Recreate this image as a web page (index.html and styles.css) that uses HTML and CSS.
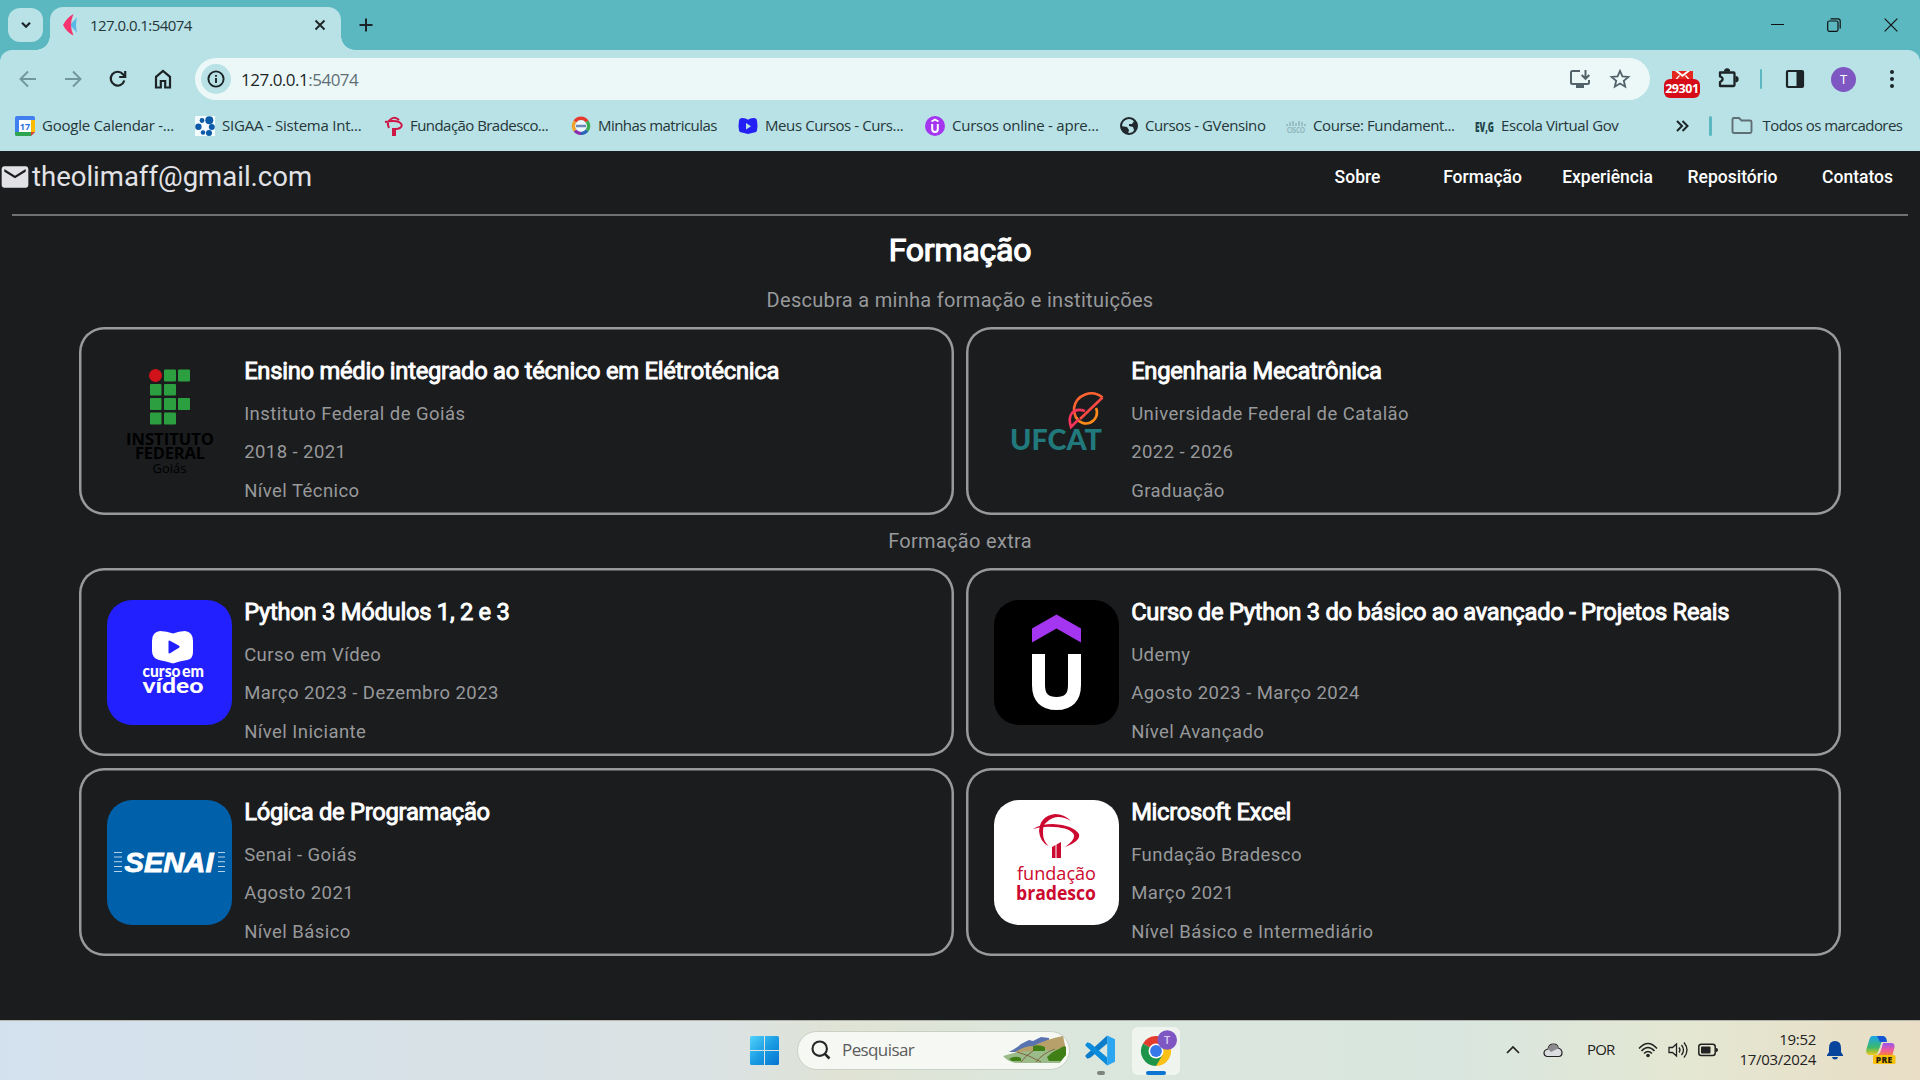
FILE: index.html
```html
<!DOCTYPE html>
<html lang="pt-BR">
<head>
<meta charset="utf-8">
<title>127.0.0.1:54074</title>
<link rel="stylesheet" href="styles.css">
</head>
<body>
<div class="screen">
  <header class="tabstrip">
    <button class="tab-search"><svg width="14" height="14" viewBox="0 0 14 14"><path d="M3 4.800l4 4 4-4" fill="none" stroke="#1c2427" stroke-width="2.200"/></svg></button>
    <div class="tab">
      <svg class="tab-icon" width="16" height="22" viewBox="0 0 16 20" preserveAspectRatio="none"><path d="M8 9l6-6q-2 7 0 14l-6-6z" fill="#56b9ea"/><path d="M0 10Q4 3 10.500 0Q8 5 8 10q0 5 2.500 9.500Q4 17 0 10z" fill="#f5336f"/></svg>
      <span class="tab-title">127.0.0.1:54074</span>
      <svg width="12" height="12" viewBox="0 0 12 12"><path d="M1.500 1.500l9 9m0-9l-9 9" stroke="#1c2427" stroke-width="1.900"/></svg>
    </div>
    <svg class="plus" width="14" height="14" viewBox="0 0 14 14"><path d="M7 .5v13M.5 7h13" stroke="#1c2427" stroke-width="2"/></svg>
    <div class="window-controls">
      <svg width="13" height="14" viewBox="0 0 13 14"><path d="M0 6.500h13" stroke="#111"/></svg>
      <svg width="14" height="14" viewBox="0 0 14 14" fill="none" stroke="#111" stroke-width="1.200"><rect x=".7" y="3" width="10.300" height="10.300" rx="1.500"/><path d="M3.500.8H11q2.200 0 2.200 2.200v7.500"/></svg>
      <svg width="14" height="14" viewBox="0 0 14 14"><path d="M.7.7l12.600 12.600m0-12.600L.7 13.300" stroke="#111" stroke-width="1.200"/></svg>
    </div>
  </header>

  <div class="toolbar">
    <nav class="nav-icons">
      <svg width="20" height="20" viewBox="0 0 20 20" fill="none" stroke="#72979b" stroke-width="1.900"><path d="M18 10H3M10 2.500L2.500 10l7.500 7.500"/></svg>
      <svg width="20" height="20" viewBox="0 0 20 20" fill="none" stroke="#72979b" stroke-width="1.900"><path d="M2 10h15M10 2.500l7.500 7.500-7.500 7.500"/></svg>
      <svg width="20" height="20" viewBox="0 0 20 20" fill="none" stroke="#1c2427" stroke-width="2.200"><path d="M16.300 11.500A6.900 6.900 0 1 1 15 5.300L17 7.500"/><path d="M17.200 2v6h-6" /></svg>
      <svg width="20" height="20" viewBox="0 0 20 20" fill="none" stroke="#1c2427" stroke-width="2.200"><path d="M3 7.800L10 2l7 5.800V18.500h-4.800V12H7.800v6.500H3z"/></svg>
    </nav>
    <div class="omnibox">
      <span class="info"><svg width="18" height="18" viewBox="0 0 18 18"><circle cx="9" cy="9" r="7.600" fill="none" stroke="#1c2427" stroke-width="1.900"/><path d="M9 8v5M9 4.900v1.900" stroke="#1c2427" stroke-width="1.900"/></svg></span>
      <span class="url">127.0.0.1<i>:54074</i></span>
      <svg class="install" width="22" height="20" viewBox="0 0 22 20" fill="none" stroke="#53636a" stroke-width="2"><path d="M11 2H3.500Q2 2 2 3.500v10Q2 15 3.500 15h15q1.500 0 1.500-1.500V11"/><path d="M16.500 1v8.500M12.700 6l3.800 3.800L20.300 6"/><path d="M7 17.500h8" stroke-width="3"/></svg>
      <svg width="20" height="20" viewBox="0 0 20 20" fill="none" stroke="#53636a" stroke-width="1.800"><path d="M10 1.900l2.400 5.500 6 .5-4.600 3.900 1.400 5.900-5.200-3.100-5.200 3.100 1.400-5.900L1.600 7.900l6-.5z"/></svg>
    </div>
    <div class="tools">
      <div class="gmail">
        <svg width="21" height="9" viewBox="0 0 21 9"><path d="M0 0h21v9H0z" fill="#e4281e"/><path d="M3 0h15l-7.500 6z" fill="#fff"/><path d="M6 0h9l-4.500 3.600z" fill="#e4281e"/><path d="M3.500 9l4-4.500M17.500 9l-4-4.500" stroke="#fff" stroke-width="1.200"/></svg>
        <b>29301</b>
      </div>
      <svg width="24" height="24" viewBox="0 0 24 24" fill="none" stroke="#1c2427" stroke-width="2.300"><path d="M4 5.500h13.500Q18.500 5.500 18.500 6.500v11.500q0 1-1 1H4v-4q2.600-1 2.600-2.900T4 9.500z" stroke-linejoin="round"/><path d="M9 4.500a2 2 0 0 1 4 0M19.500 10.200a2 2 0 0 1 0 4" fill="#1c2427"/></svg>
      <i class="sep"></i>
      <svg width="20" height="20" viewBox="0 0 20 20"><rect x="2" y="2" width="16" height="16" rx="1" fill="none" stroke="#1c2427" stroke-width="2.200"/><path d="M11.500 2H18v16h-6.500z" fill="#1c2427"/></svg>
      <span class="avatar">T</span>
      <svg width="6" height="22" viewBox="0 0 6 22" fill="#1c2427"><circle cx="3" cy="4" r="2"/><circle cx="3" cy="11" r="2"/><circle cx="3" cy="18" r="2"/></svg>
    </div>
  </div>

  <div class="bookmarks">
    <a class="w180 wide"><svg viewBox="0 0 20 20"><path d="M0 2Q0 0 2 0h16q2 0 2 2v14l-4 4H2q-2 0-2-2z" fill="#3f7ff0"/><path d="M16 4h4v12h-4z" fill="#fbbc04"/><path d="M4 16h12v4H2q-2 0-2-2v-2z" fill="#2fa450"/><path d="M16 16h4l-4 4z" fill="#ea4335"/><path d="M4 4h12v12H4z" fill="#fff"/><text x="10" y="13.700" text-anchor="middle" class="cal">17</text></svg><span>Google Calendar -...</span></a>
    <a class="w189 wide"><svg viewBox="0 0 20 20"><path d="M0 0h20v20H0z" fill="#f4fbff"/><g fill="#0b5aa8"><circle cx="14.300" cy="4.300" r="4"/><circle cx="7" cy="4.500" r="2.400"/><circle cx="3.400" cy="10.700" r="3.200"/><circle cx="16.800" cy="11" r="3"/><circle cx="8" cy="16.500" r="2.300"/><circle cx="14" cy="16.900" r="3"/></g></svg><span>SIGAA - Sistema Int...</span></a>
    <a class="w187 near"><svg viewBox="0 0 20 20" fill="none" stroke="#cf1747" stroke-width="2"><path d="M5 12Q2 6 7 3q4-3 8 1M1 6q9-2 14 0 5 3 1 6-2 1-4 1"/><path d="M10 12v8" stroke-width="4"/></svg><span>Fundação Bradesco...</span></a>
    <a class="w167"><svg viewBox="0 0 20 20" fill="none" stroke-width="3.500"><path d="M4 5.500A7.300 7.300 0 0 1 16 5.500" stroke="#e63a2e"/><path d="M16 5.500A7.300 7.300 0 0 1 16 14.500" stroke="#3caa4f"/><path d="M16 14.500A7.300 7.300 0 0 1 10 17.300" stroke="#2864b8"/><path d="M10 17.300A7.300 7.300 0 0 1 4 14.500" stroke="#8b2eae"/><path d="M4 14.500A7.300 7.300 0 0 1 4 5.500" stroke="#f0a02b"/><circle cx="10" cy="10" r="5.700" fill="#eef7fb" stroke="none"/><path d="M5 10h10" stroke="#6a88ba" stroke-width="2.500"/></svg><span>Minhas matriculas</span></a>
    <a class="w187 mid"><svg viewBox="0 0 20 20"><path d="M1 5q0-3 3.500-3Q8 2.200 10 3.700q2-1.500 5.500-1.700Q19 2 19 5q1 5 0 9 0 2-3 2.500-3 .5-6 1.500-3-1-6-1.500-3-.5-3-2.500-1-4 0-9z" fill="#2320f5"/><path d="M8 7l5 3.200-5 3.300z" fill="#b8e2e5"/></svg><span>Meus Cursos - Curs...</span></a>
    <a class="w194 wide"><svg viewBox="0 0 20 20"><circle cx="10" cy="10" r="10" fill="#a435f0"/><path d="M6.500 5.500L10 3.500l3.500 2" fill="none" stroke="#fff" stroke-width="1.800"/><path d="M7.200 8v5q0 3 2.800 3t2.800-3V8" fill="none" stroke="#fff" stroke-width="2"/></svg><span>Cursos online - apre...</span></a>
    <a class="w167 mid near"><svg viewBox="0 0 20 20"><circle cx="10" cy="10" r="8" fill="none" stroke="#20292d" stroke-width="2"/><path d="M10 2L4 5l-2 5 6 1 2 3-1 4-6-3-1-5L5 3zM11 2l4 3-2 3h-3v2l4 1 1 3-1 3 4-5V8l-4-6z" fill="#20292d"/></svg><span>Cursos - GVensino</span></a>
    <a class="w189 mid"><svg viewBox="0 0 20 20" stroke="#8fb3b9" stroke-width="1.500"><path d="M1 8v2M4 6v4M7 5v5M10 7v3M13 5v5M16 6v4M19 8v2"/><text x="1" y="16.500" class="cisco" textLength="18" lengthAdjust="spacingAndGlyphs">CISCO</text></svg><span>Course: Fundament...</span></a>
    <a class="w189 mid near"><svg viewBox="0 0 20 20"><text x="0" y="15.500" class="evg" textLength="19" lengthAdjust="spacingAndGlyphs">EV,G</text></svg><span>Escola Virtual Gov</span></a>
    <svg class="more" viewBox="0 0 14 14" fill="none" stroke="#1c2427" stroke-width="2"><path d="M2 2l5 5-5 5M7.500 2l5 5-5 5"/></svg>
    <i class="sep"></i>
    <a class="all"><svg viewBox="0 0 22 20" fill="none" stroke="#5f6f75" stroke-width="1.900"><path d="M1.500 3.500Q1.500 2 3 2h5l2.500 2.500H19q1.500 0 1.500 1.500v9.500q0 1.500-1.500 1.500H3q-1.500 0-1.500-1.500z"/></svg><span>Todos os marcadores</span></a>
  </div>

  <main class="page">
    <header class="site-head">
      <div class="mail"><svg width="32" height="32" viewBox="0 0 24 24"><path d="M20 4H4c-1.100 0-1.990.9-1.990 2L2 18c0 1.100.9 2 2 2h16c1.100 0 2-.9 2-2V6c0-1.100-.9-2-2-2zm0 4l-8 5-8-5V6l8 5 8-5v2z" fill="#e2e2e6"/></svg><span>theolimaff@gmail.com</span></div>
      <nav class="menu"><a>Sobre</a><a>Formação</a><a>Experiência</a><a>Repositório</a><a>Contatos</a></nav>
    </header>
    <hr>
    <h1>Formação</h1>
    <p class="lead">Descubra a minha formação e instituições</p>
    <section class="cards">
      <article class="card">
        <svg class="logo" viewBox="0 1.500 125 125">
          <circle cx="48.500" cy="18" r="6.500" fill="#d0131a"/>
          <g fill="#2c9f40"><rect x="57" y="12" width="12" height="12" rx="1"/><rect x="71" y="12" width="12" height="12" rx="1"/><rect x="43" y="26.500" width="11.500" height="11.500" rx="1"/><rect x="57" y="26.500" width="12" height="11.500" rx="1"/><rect x="43" y="40.500" width="11.500" height="12" rx="1"/><rect x="57" y="40.500" width="12" height="12" rx="1"/><rect x="71" y="40.500" width="12" height="12" rx="1"/><rect x="43" y="55" width="11.500" height="12" rx="1"/><rect x="57" y="55" width="12" height="12" rx="1"/></g>
          <g class="if-text"><text x="19" y="87" textLength="88" class="strong">INSTITUTO</text><text x="28" y="101" textLength="70" class="strong">FEDERAL</text><text x="45.500" y="115" textLength="34" class="small">Goiás</text></g>
        </svg>
        <div class="info-text"><h2>Ensino médio integrado ao técnico em Elétrotécnica</h2><p>Instituto Federal de Goiás</p><p>2018 - 2021</p><p>Nível Técnico</p></div>
      </article>
      <article class="card">
        <svg class="logo" viewBox="0 1 125 125">
          <g fill="none" stroke-width="2.600"><path d="M108.500 39.500A17.500 17.500 0 0 0 80 50q0 5 2 10" stroke="#ff6430"/><path d="M82 59a10.800 10.800 0 1 0 20-9" stroke="#ff8a1c"/><path d="M91 53q-9-3-13 2-4 5-1 14l8-8" stroke="#f63358"/><path d="M86 61l22.500-21.500" stroke="#ff4a42"/></g>
          <text x="16" y="91.500" class="ufcat" textLength="92" lengthAdjust="spacingAndGlyphs">UFCAT</text>
        </svg>
        <div class="info-text"><h2>Engenharia Mecatrônica</h2><p>Universidade Federal de Catalão</p><p>2022 - 2026</p><p>Graduação</p></div>
      </article>
    </section>
    <p class="lead extra">Formação extra</p>
    <section class="cards">
      <article class="card">
        <svg class="logo" viewBox="0 0 125 125">
          <rect width="125" height="125" rx="25" fill="#2320ff"/>
          <path d="M45 41q0-9 8-10 7 0 13 2.500Q72 31 78 31q8 1 8 10v11q0 7-6 8-8 1-14 3.500Q59 61 52 60q-7-2-7-9z" fill="#fff"/><path d="M61.500 41.500q0-1.500 1.500-.7l9 5q1.500 1 0 2l-9 5.500q-1.500.7-1.500-.8z" fill="#2320ff"/>
          <g class="cev"><text x="35.500" y="77" textLength="38" lengthAdjust="spacingAndGlyphs" class="cev-a">curso</text><text x="75" y="77" textLength="22" lengthAdjust="spacingAndGlyphs" class="cev-a">em</text><text x="35.500" y="92.500" textLength="61" lengthAdjust="spacingAndGlyphs" class="cev-b">vídeo</text></g>
        </svg>
        <div class="info-text"><h2>Python 3 Módulos 1, 2 e 3</h2><p>Curso em Vídeo</p><p>Março 2023 - Dezembro 2023</p><p>Nível Iniciante</p></div>
      </article>
      <article class="card">
        <svg class="logo" viewBox="0 0 125 125">
          <rect width="125" height="125" rx="25" fill="#000"/>
          <path d="M38 28.500L62.500 14.500 87 28.500v14L62.500 28.500 38 42.500z" fill="#a435f0"/>
          <path d="M44.500 54v31q0 18.500 18 18.500t18-18.500V54" fill="none" stroke="#fff" stroke-width="13"/>
        </svg>
        <div class="info-text"><h2>Curso de Python 3 do básico ao avançado - Projetos Reais</h2><p>Udemy</p><p>Agosto 2023 - Março 2024</p><p>Nível Avançado</p></div>
      </article>
      <article class="card">
        <svg class="logo" viewBox="0 0 125 125">
          <rect width="125" height="125" rx="25" fill="#0060a9"/>
          <path d="M7 52.500h8M7 57h8M7 61.700h8M7 66.500h8M7 71.500h8M111 52.500h7M111 57h7M111 61.700h7M111 66.500h7M111 71.500h7" stroke="#b7d3ea" stroke-width="1"/>
          <text x="17.500" y="71.500" class="senai" textLength="89" lengthAdjust="spacingAndGlyphs">SENAI</text>
        </svg>
        <div class="info-text"><h2>Lógica de Programação</h2><p>Senai - Goiás</p><p>Agosto 2021</p><p>Nível Básico</p></div>
      </article>
      <article class="card">
        <svg class="logo" viewBox="0 0 125 125">
          <rect width="125" height="125" rx="25" fill="#fff"/>
          <g fill="#cc092f"><path d="M54.500 46Q46 42 45 31 46 16 61 14q9 0 16 7-10-6-18-3-11 4-10 15 0 8 5.500 13z"/><path d="M39 29q8-5 20-5 20 1 26 10 2 7-14 13 10-7 9-12-3-7-20-8-12-1-21 2z"/><path d="M58 47l3.500-2v13H58zM62.500 44.500L67 42v16h-4.500z"/></g>
          <text x="23" y="80" class="fund" textLength="79" lengthAdjust="spacingAndGlyphs">fundação</text>
          <text x="22" y="99.500" class="brad" textLength="80" lengthAdjust="spacingAndGlyphs">bradesco</text>
        </svg>
        <div class="info-text"><h2>Microsoft Excel</h2><p>Fundação Bradesco</p><p>Março 2021</p><p>Nível Básico e Intermediário</p></div>
      </article>
    </section>
  </main>

  <footer class="taskbar">
    <div class="dock">
      <svg class="win" width="30" height="30" viewBox="0 0 30 30"><defs><linearGradient id="w" x2="1" y2="1"><stop stop-color="#52d3fb"/><stop offset=".5" stop-color="#1b9de4"/><stop offset="1" stop-color="#0573cf"/></linearGradient></defs><path d="M1.500 0H14v14H0V1.500Q0 0 1.500 0zM15 0h12.500Q29 0 29 1.500V14H15zM0 15h14v14H1.500Q0 29 0 27.500zM15 15h14v12.500q0 1.500-1.500 1.500H15z" fill="url(#w)"/></svg>
      <div class="search">
        <svg width="20" height="20" viewBox="0 0 20 20" fill="none" stroke="#262626" stroke-width="2.100"><circle cx="8.700" cy="8.700" r="7.200"/><path d="M13.800 13.800L18.500 18.500" stroke-width="2.600"/></svg>
        <span>Pesquisar</span>
        <svg class="land" width="64" height="28" viewBox="0 0 64 28"><path d="M6 16Q14 12 18 8l8-4 4 1 8-4 8 1v14z" fill="#5873b0"/><path d="M12 16Q22 10 30 10q14-7 30-10l3 14-6 12z" fill="#b7a069"/><path d="M0 20l14-4 16-1 30-2 3 5-6 9H12Q4 25 0 20z" fill="#9cbb8a"/><path d="M14 16q12 3 24 10M30 15q-8 5-12 11M52 13q-12 4-19 13" fill="none" stroke="#7c5b38" stroke-width=".9"/><path d="M6 23q6-4 12-1v3H9zM30 10q6-2 12 1v4l-12 0zM44 21q6-6 12-8 5-4 7-2v8l-5 6H46z" fill="#3f7f16"/></svg>
      </div>
      <div class="app vs"><svg width="31" height="31" viewBox="0 0 30 30"><path d="M21.500.5L29 4v22l-7.500 3.500z" fill="#2aa5f2"/><path d="M21.500.5v7.800L5.500 21.700 2.500 23 .5 21V19.500z" fill="#0a7cc9"/><path d="M21.500 29.500v-7.800L5.500 8.300 2.500 7 .5 9v1.500z" fill="#0a8bdc"/></svg></div>
      <div class="app active"><svg width="38" height="40" viewBox="0 0 38 40"><path d="M17 21L4 13.500A15 15 0 0 1 30 13.500z" fill="#e33b2e"/><path d="M17 21l13-7.500A15 15 0 0 1 17 36z" fill="#fbc116"/><path d="M17 21L4 13.500A15 15 0 0 0 17 36l6.500-11z" fill="#1e9449"/><circle cx="17" cy="21" r="7.500" fill="#fff"/><circle cx="17" cy="21" r="5.900" fill="#3478ea"/><circle cx="28.200" cy="10" r="9.800" fill="#7e57c2"/><text x="28.200" y="14" text-anchor="middle" class="badge">T</text></svg></div>
    </div>
    <div class="tray">
      <svg class="chev" width="14" height="14" viewBox="0 0 14 14"><path d="M1 10l6-6 6 6" fill="none" stroke="#222" stroke-width="1.700"/></svg>
      <svg class="cloud" width="20" height="15" viewBox="0 0 20 15"><path d="M4 13.500Q1 13 1 10t4-4q1-5 5.500-5T15 5q4 1 4 4.800 0 3.700-3.500 3.700z" fill="#dcdde0" stroke="#222" stroke-width="1.200"/><path d="M5 6q1-4.500 5.500-4.500T15 5.500L8 9z" fill="#8c8c90"/></svg>
      <span class="lang">POR</span>
      <svg class="wifi" width="20" height="16" viewBox="0 0 20 16" fill="none" stroke="#222" stroke-width="1.500"><path d="M1 6.500q9-10 18 0M3.500 9q6.500-7 13 0M6 11.500q4-4 8 0"/><circle cx="10" cy="13.500" r="1.800" fill="#222" stroke="none"/></svg>
      <svg class="vol" width="20" height="18" viewBox="0 0 20 18" fill="none" stroke="#222" stroke-width="1.300"><path d="M1 6.500h3.500L8.500 3v12l-4-3.500H1zM11 6.500q2 2.500 0 5M13.500 4q4 5 0 10M16 1.500q6 7.500 0 15"/></svg>
      <svg class="bat" width="20" height="14" viewBox="0 0 20 14"><rect x=".8" y="1.300" width="16.400" height="11.200" rx="2.500" fill="none" stroke="#222" stroke-width="1.500"/><rect x="3" y="3.500" width="9.500" height="7" rx="1" fill="#222"/><path d="M18 5q2 0 2 2t-2 2z" fill="#222"/></svg>
      <div class="clock"><span>19:52</span><span>17/03/2024</span></div>
      <svg class="bell" width="16" height="20" viewBox="0 0 16 20" fill="#08439c"><path d="M8 1Q14 1 14 8v4l2 3v1H0v-1l2-3V8q0-7 6-7zM5 17h6q-.5 2.500-3 2.500T5 17z"/></svg>
      <svg class="copilot" width="30" height="30" viewBox="0 0 30 30"><defs><linearGradient id="c" x2="0" y2="1"><stop stop-color="#1aa3e8"/><stop offset=".6" stop-color="#3db86a"/><stop offset="1" stop-color="#f6c914"/></linearGradient><linearGradient id="d" x2="0" y2="1"><stop stop-color="#9753f0"/><stop offset=".6" stop-color="#ef5c9c"/><stop offset="1" stop-color="#f4813d"/></linearGradient></defs><path d="M6 1h10q4 0 5 5h-5l-4 11q-1 3-4 3H3q-4-1-2.500-6l3-10Q4.500 1 6 1z" fill="url(#c)"/><path d="M11 1h6q3 0 4 6h-7z" fill="#1453d4"/><path d="M17 8h8q4 0 3.500 4l-2 8H11q3-1 4-5z" fill="url(#d)"/><rect x="7" y="20" width="22.500" height="9" rx="1.500" fill="#f8c10d"/><text x="18.200" y="27.500" text-anchor="middle" class="pre">PRE</text></svg>
    </div>
  </footer>
</div>
</body>
</html>
```
FILE: styles.css
```css
* { box-sizing: border-box; }
body { margin: 0; background: #1a1c1e; font-family: "Open Sans", "Noto Sans", sans-serif; }
svg { display: block; flex: none; overflow: visible; }
i { font-style: normal; }
.screen { width: 1920px; height: 1080px; display: flex; flex-direction: column; overflow: hidden; }

/* browser tabs */
.tabstrip { height: 50px; background: #5bb8c1; display: flex; align-items: center; padding-left: 8px; flex: none; }
.tab-search { width: 35px; height: 34px; border: 0; border-radius: 12px; background: #b8e2e5; padding: 0; display: grid; place-items: center; }
.tab { position: relative; width: 291px; height: 43px; margin: 7px 0 0 7px; padding: 0 15px 7px 13px; background: #b8e2e5; border-radius: 13px 13px 0 0; display: flex; align-items: center; }
.tab::before, .tab::after { content: ""; position: absolute; bottom: 0; width: 14px; height: 14px; }
.tab::before { right: 100%; background: radial-gradient(circle at 0 0, transparent 13.5px, #b8e2e5 14px); }
.tab::after { left: 100%; background: radial-gradient(circle at 100% 0, transparent 13.5px, #b8e2e5 14px); }
.tab-title { flex: 1; margin-left: 11px; font-size: 15px; letter-spacing: -0.55px; color: #26363a; }
.plus { margin-left: 18px; }
.window-controls { margin-left: auto; display: flex; gap: 43px; padding-right: 22px; }

/* address row */
.toolbar { height: 58px; background: #5bb8c1; flex: none; display: flex; align-items: center; position: relative; z-index: 0; }
.toolbar::before { content: ""; position: absolute; inset: 0; z-index: -1; background: #b8e2e5; border-radius: 12px 12px 0 0; }
.nav-icons { width: 195px; display: flex; gap: 25px; padding-left: 17.5px; }
.omnibox { width: 1455px; height: 42px; border-radius: 21px; background: #ecf8f8; display: flex; align-items: center; padding: 0 20px 0 6px; }
.info { width: 30px; height: 30px; border-radius: 50%; background: #b8e2e5; display: grid; place-items: center; }
.url { flex: 1; margin-left: 10px; font-size: 17px; letter-spacing: -0.5px; color: #1d2528; }
.url i { color: #5f6f75; }
.install { margin-right: 19px; }
.tools { display: flex; align-items: center; height: 58px; }
.gmail { width: 36px; margin-left: 14px; display: flex; flex-direction: column; align-items: center; padding-top: 10px; }
.gmail b { margin-top: -1px; width: 36px; height: 19px; border-radius: 6px; background: #d60d18; color: #fff; font-size: 12.5px; line-height: 19px; text-align: center; letter-spacing: -0.4px; }
.tools > svg:nth-of-type(1) { margin-left: 16px; }
.sep { width: 3px; height: 20px; border-radius: 2px; background: #5bb8c1; }
.tools .sep { margin: 0 23px 0 20px; width: 2px; height: 20px; }
.avatar { width: 25px; height: 25px; border-radius: 50%; background: #7e57c2; color: #fff; font-size: 13px; display: grid; place-items: center; margin: 0 33px 0 26px; }

/* bookmarks row */
.bookmarks { height: 43px; flex: none; background: #b8e2e5; display: flex; align-items: center; padding: 0 0 8px 15px; font-size: 15px; letter-spacing: -0.55px; color: #26363a; white-space: nowrap; }
.bookmarks a { display: flex; align-items: center; gap: 7px; flex: none; }
.bookmarks a svg { width: 20px; height: 20px; }
.bookmarks span { margin-top: -1px; }
.w180 { width: 180px; } .w189 { width: 189px; } .w187 { width: 187px; } .w167 { width: 167px; } .w194 { width: 194px; }
.bookmarks .wide { letter-spacing: -0.23px; }
.bookmarks .mid { letter-spacing: -0.4px; }
.bookmarks .near { gap: 6px; }
.bookmarks .more { width: 14px; height: 14px; margin-left: 11px; }
.bookmarks .sep { margin: 0 19px 0 20px; }
.bookmarks .all { gap: 9.5px; }
.bookmarks .all svg { width: 22px; }
.cal { font: 700 9px "Open Sans", sans-serif; fill: #2a72e0; letter-spacing: 0; }
.cisco { font: 900 7px Lato, sans-serif; fill: #8fb3b9; stroke: none; letter-spacing: 0; }
.evg { font: 800 14px "Open Sans", sans-serif; fill: #1f464b; letter-spacing: 0; }

/* portfolio page */
.page { flex: 1; background: #1a1c1e; font-family: Roboto, sans-serif; color: #e2e2e6; }
.site-head { height: 52px; display: flex; justify-content: space-between; align-items: center; }
.mail { display: flex; align-items: center; font-size: 27.5px; margin-left: -1px; }
.mail span { margin: -2px 0 0 1px; }
.menu { display: flex; font-weight: 500; font-size: 17.5px; color: #fff; }
.menu a { width: 125px; text-align: center; }
hr { margin: 11px 12px 0; border: 0; height: 2px; background: #6e7072; }
h1, h2, p { margin: 0; font-weight: 400; white-space: nowrap; }
h1 { margin-top: 14px; height: 40px; line-height: 40px; font-size: 32px; letter-spacing: -0.2px; text-align: center; color: #fff; -webkit-text-stroke: 1.2px #fff; }
.lead { margin-top: 15px; height: 30px; line-height: 30px; font-size: 20px; letter-spacing: 0.3px; text-align: center; color: #98999b; }
.lead.extra { margin-top: 11px; }
.cards { display: grid; grid-template-columns: 874.5px 874.5px; gap: 12.5px; justify-content: center; margin-top: 12px; }
.lead.extra + .cards { margin-top: 12.5px; }
.card { height: 187.5px; border-radius: 25px; box-shadow: inset 0 0 0 2.5px #98999b; display: flex; padding: 32px 0 0 27.4px; }
.logo { width: 125px; height: 125px; }
.info-text { margin-left: 12.5px; margin-top: -3px; }
h2 { height: 30px; line-height: 30px; font-size: 23.75px; letter-spacing: -0.27px; color: #fff; -webkit-text-stroke: 0.9px #fff; }
.info-text p { height: 38.5px; line-height: 38.5px; font-size: 18.5px; letter-spacing: 0.44px; color: #98999b; }
.info-text h2 + p { margin-top: 8.5px; }
.if-text { font-family: "Open Sans", sans-serif; fill: #000; }
.if-text .strong { font-weight: 700; font-size: 16.5px; }
.if-text .small { font-size: 13px; }
.ufcat { font: 900 28px Lato, sans-serif; fill: #21797c; }
.cev { fill: #fff; font-family: Lato, sans-serif; font-weight: 900; }
.cev-a { font-size: 16px; } .cev-b { font-size: 21px; }
.senai { font: italic 700 27px "Liberation Sans", sans-serif; fill: #fff; stroke: #fff; stroke-width: 0.8px; }
.fund { font: 400 19px "Open Sans", sans-serif; fill: #cc092f; }
.brad { font: 700 19px "Open Sans", sans-serif; fill: #cc092f; }

/* taskbar */
.taskbar { height: 60px; flex: none; border-top: 1px solid #b4b5ad; background: linear-gradient(90deg, #d3e1ee 0%, #dbe2e2 38%, #e0e3d4 44%, #dbe7dd 55%, #d9e6df 76%, #e4e7d2 88%, #e9ddc5 100%); display: flex; justify-content: space-between; align-items: center; }
.dock { margin-left: 750px; display: flex; align-items: center; }
.search { width: 273px; height: 39px; margin: 0 16px 0 17px; border: 1px solid #c9d0c6; border-radius: 20px; background: #f6f8f4; display: flex; align-items: center; padding: 0 2px 0 13px; }
.search svg { margin-top: -1px; }
.search span { flex: 1; margin: -2px 0 0 11px; font-size: 17px; letter-spacing: -0.6px; color: #5c5c5c; }
.app { position: relative; height: 48px; display: flex; align-items: center; }
.vs { margin-right: 15px; left: -1px; }
.active { width: 48px; border-radius: 6px; background: #f0f4ef; }
.active svg { margin: -2px 0 0 7px; }
.app::after { content: ""; position: absolute; bottom: 0; left: 50%; transform: translateX(-50%); width: 8px; height: 4px; border-radius: 2px; background: #7f837e; }
.active::after { width: 20px; background: #0b76d1; }
.badge { font: 600 11px "Open Sans", sans-serif; fill: #ddd0f4; }
.tray { display: flex; align-items: center; font-size: 15px; color: #222; margin-right: 24px; }
.tray svg { margin-top: -1px; }
.tray .cloud { margin-left: 23px; }
.lang { margin: -3px 0 0 24px; letter-spacing: -0.8px; width: 28px; }
.tray .wifi { margin-left: 23px; }
.tray .vol { margin-left: 10px; }
.tray .bat { margin-left: 10px; }
.clock { width: 90px; margin: -4px 0 0 8px; display: flex; flex-direction: column; align-items: flex-end; line-height: 20px; letter-spacing: -0.3px; }
.tray .bell { margin-left: 11px; }
.tray .copilot { margin-left: 23px; }
.pre { font: 800 8.5px "Open Sans", sans-serif; fill: #2a2205; letter-spacing: 0.3px; }
```
